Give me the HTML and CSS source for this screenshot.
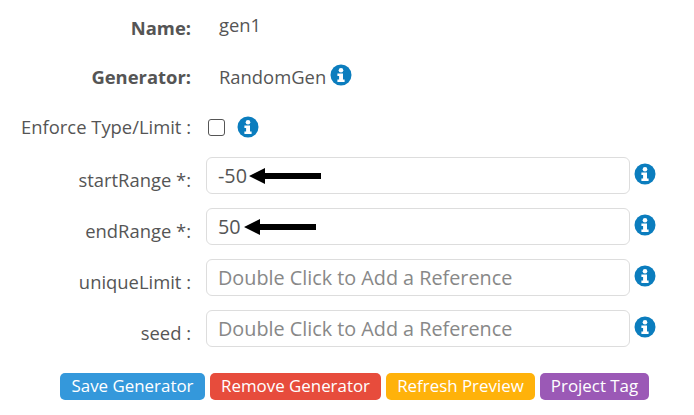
FILE: index.html
```html
<!DOCTYPE html>
<html lang="en">
<head>
  <meta charset="UTF-8">
  <meta name="viewport" content="width=device-width, initial-scale=1.0">
  <title>Generator</title>
  <link rel="stylesheet" href="styles.css">
</head>
<body>

<svg class="icon-defs" width="0" height="0">
  <symbol id="info" viewBox="0 0 22 22">
    <circle cx="11" cy="11" r="10.5" fill="#0b7dbe"/>
    <circle cx="11" cy="6.2" r="2.3" fill="#fff"/>
    <path d="M7.4 9.6h5.6v6h1.6v2.3H7.4v-2.3h1.7v-3.7H7.4z" fill="#fff"/>
  </symbol>
</svg>

<div class="form">
  <div class="row row-static">
    <label class="name bold">Name:</label>
    <span class="value value-name">gen1</span>
  </div>
  <div class="row row-static">
    <label class="name bold label-up">Generator:</label>
    <span class="value">RandomGen</span>
    <svg class="info info-inline"><use href="#info"/></svg>
  </div>
  <div class="row row-check">
    <label class="name label-up">Enforce Type/Limit :</label>
    <span class="check"></span>
    <svg class="info info-check"><use href="#info"/></svg>
  </div>
  <div class="row row-input">
    <label class="name">startRange *:</label>
    <div class="field">
      <input type="text" value="-50">
      <svg class="arrow arrow-start" viewBox="0 0 72 16"><path d="M0 8 16 0v5h56v6H16v5z"/></svg>
    </div>
    <svg class="info"><use href="#info"/></svg>
  </div>
  <div class="row row-input">
    <label class="name">endRange *:</label>
    <div class="field">
      <input type="text" value="50">
      <svg class="arrow arrow-end" viewBox="0 0 72 16"><path d="M0 8 16 0v5h56v6H16v5z"/></svg>
    </div>
    <svg class="info"><use href="#info"/></svg>
  </div>
  <div class="row row-input">
    <label class="name">uniqueLimit :</label>
    <div class="field"><input type="text" placeholder="Double Click to Add a Reference"></div>
    <svg class="info"><use href="#info"/></svg>
  </div>
  <div class="row row-input">
    <label class="name">seed :</label>
    <div class="field"><input type="text" placeholder="Double Click to Add a Reference"></div>
    <svg class="info"><use href="#info"/></svg>
  </div>
  <div class="buttons">
    <button class="btn btn-save">Save Generator</button>
    <button class="btn btn-remove">Remove Generator</button>
    <button class="btn btn-refresh">Refresh Preview</button>
    <button class="btn btn-tag">Project Tag</button>
  </div>
</div>

</body>
</html>
```

FILE: styles.css
```css
html, body { margin: 0; height: 100%; background: #fff; }
body { font-family: "Open Sans", sans-serif; font-size: 18.4px; color: #555; overflow: hidden; }
.icon-defs { display: block; }

.form { padding-top: 2px; }
.row { display: flex; align-items: center; }
.row-static { height: 50px; }
.row-check { height: 50px; margin-bottom: 5px; }
.row-input { height: 37px; margin-bottom: 14px; }
.row-input .name { margin-top: 8px; }
.row-input .info { margin-top: -3px; }

.name { width: 191px; flex: none; text-align: right; }
.label-up { margin-top: -2px; }
.bold { font-weight: 700; }
.value { margin-left: 28px; line-height: 24px; }
.value-name { margin-top: -4px; }

.check { width: 15px; height: 15px; margin-left: 17px; border: 1.5px solid #555; border-radius: 3px; }

.field { position: relative; width: 424px; margin-left: 15px; }
.field input { display: block; box-sizing: border-box; width: 100%; height: 37px; padding: 0 11px; border: 1px solid #ddd; border-radius: 6px; background: #fff; font: inherit; font-size: 19.8px; color: #555; outline: none; }
.field input::placeholder { color: #888; opacity: 1; }

.info { width: 22px; height: 22px; margin-left: 4px; flex: none; }
.info-inline { margin-left: 4px; margin-top: -4px; }
.info-check { margin-left: 12px; }

.arrow { position: absolute; top: 11px; width: 72px; height: 16px; fill: #000; }
.arrow-start { left: 43px; }
.arrow-end { left: 38px; }

.buttons { display: flex; gap: 5px; padding: 12px 0 0 60px; }
.btn { height: 27px; padding: 0 0 2px; border: none; border-radius: 5px; font: inherit; font-size: 16.9px; color: #fff; }
.btn-save { width: 145px; background: #3498db; }
.btn-remove { width: 171px; background: #e74c3c; }
.btn-refresh { width: 149px; background: #ffb20a; }
.btn-tag { width: 109px; background: #9b59b6; }
```
